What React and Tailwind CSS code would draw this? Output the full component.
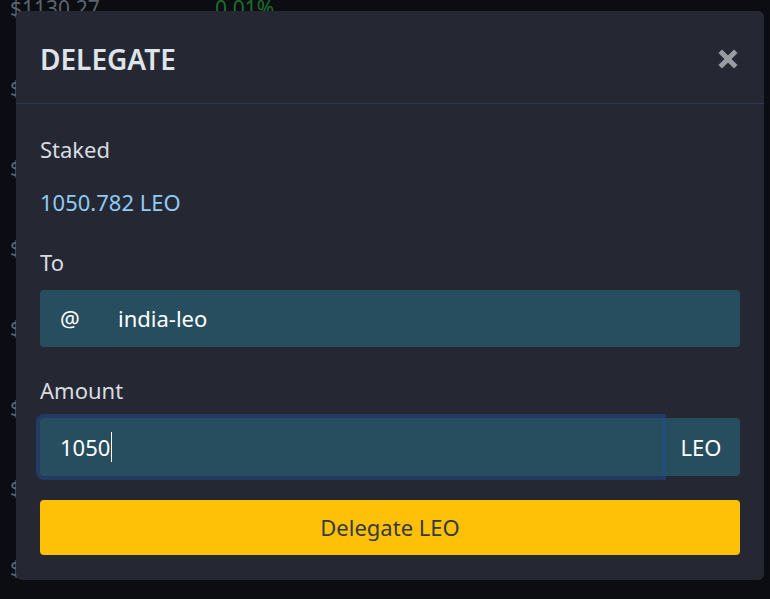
import React from "react";

const rows = [
  ["$1130.27", "0.01%", ""],
  ["$", "", ""],
  ["$", "", ""],
  ["$", "", ""],
  ["$", "", ""],
  ["$", "", ""],
  ["$", "", ""],
  ["$ 13.27", "+0.00%", "1050.782"],
];

export default function App() {
  return (
    <div
      className="relative w-[770px] h-[599px] overflow-hidden bg-[#0b0d12]"
      style={{ fontFamily: '"Noto Sans", "Open Sans", sans-serif' }}
    >
      <div className="flex flex-col -mt-[4px]">
        {rows.map((r, i) => (
          <div key={i} className="flex h-[80px] items-start text-[21px] leading-[24px]">
            <div className="w-[205px] pl-[10px] text-[#5d6470]">{r[0]}</div>
            <div className="w-[230px] pl-[10px] text-[#1f6e2a]">{r[1]}</div>
            <div className="pl-[10px] text-[#5d6470]">{r[2]}</div>
          </div>
        ))}
      </div>

      <div className="absolute left-[16px] top-[11px] w-[748px] h-[569px] rounded-[6px] bg-[#252833] flex flex-col">
        <div className="h-[93px] flex items-center justify-between pl-[24px] pr-[26px] pt-[3px] border-b border-[#2e3a4f]">
          <h2 className="text-[28px] font-semibold text-[#dfe3ea]">DELEGATE</h2>
          <svg width="20" height="20" viewBox="0 0 20 20">
            <path d="M4 4 L16 16 M16 4 L4 16" stroke="#9a9ca3" strokeWidth="5" strokeLinecap="square" />
          </svg>
        </div>
        <div className="flex flex-col px-[24px] pt-[31px]">
          <div className="text-[22px] leading-[28px] text-[#d8dbe0]">Staked</div>
          <div className="mt-[25px] text-[22px] leading-[28px] text-[#8ecbf5]">1050.782 LEO</div>
          <div className="mt-[32px] text-[22px] leading-[28px] text-[#d8dbe0]">To</div>
          <div className="mt-[14px] h-[57px] rounded-[4px] bg-[#264e5f] flex items-center text-[22px] text-white">
            <span className="pl-[20px] w-[78px]">@</span>
            <span>india-leo</span>
          </div>
          <div className="mt-[29px] text-[22px] leading-[28px] text-[#d8dbe0]">Amount</div>
          <div className="mt-[14px] h-[58px] flex">
            <div className="relative flex-1 rounded-l-[4px] bg-[#264e5f] flex items-center text-[22px] text-white pl-[20px] shadow-[0_0_0_4px_rgba(30,80,160,0.45)] z-10">
              <span>1050</span>
              <span className="w-[1px] h-[30px] bg-white ml-[1px]"></span>
            </div>
            <div className="w-[78px] rounded-r-[4px] bg-[#264e5f] flex items-center justify-center text-[22px] text-white">
              LEO
            </div>
          </div>
          <button className="mt-[24px] h-[55px] rounded-[4px] bg-[#ffc107] text-[22px] text-[#343a40]">
            Delegate LEO
          </button>
        </div>
      </div>
    </div>
  );
}
